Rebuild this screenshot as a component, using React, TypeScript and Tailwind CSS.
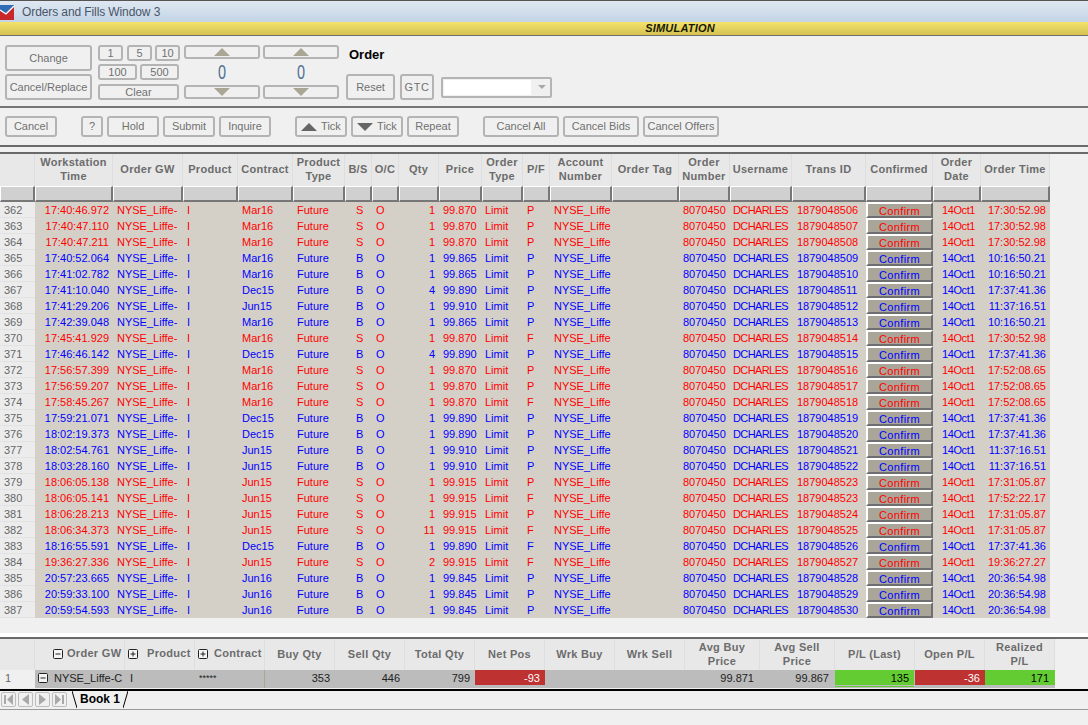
import React from "react";

const GRID = "grid grid-cols-[35px_78px_70px_55px_55px_52px_27px_27px_40px_43px_41px_27px_62px_67px_51px_62px_74px_67px_48px_69px] grid-rows-[minmax(0,1fr)] w-[1050px]";
const SUM_GRID = "grid grid-cols-[35px_15px_75px_70px_70px_70px_70px_70px_70px_70px_70px_75px_75px_80px_70px_70px] grid-rows-[minmax(0,1fr)] w-[1055px]";

const headers = [
  "", "Workstation|Time", "Order GW", "Product", "Contract", "Product|Type", "B/S", "O/C", "Qty", "Price",
  "Order|Type", "P/F", "Account|Number", "Order Tag", "Order|Number", "Username", "Trans ID", "Confirmed", "Order|Date", "Order Time",
];

// n, time, contract, side, qty, price, p/f, trans id, order time
const rows: [number, string, string, string, number, string, string, string, string][] = [
  [362, "17:40:46.972", "Mar16", "S", 1, "99.870", "P", "1879048506", "17:30:52.98"],
  [363, "17:40:47.110", "Mar16", "S", 1, "99.870", "P", "1879048507", "17:30:52.98"],
  [364, "17:40:47.211", "Mar16", "S", 1, "99.870", "P", "1879048508", "17:30:52.98"],
  [365, "17:40:52.064", "Mar16", "B", 1, "99.865", "P", "1879048509", "10:16:50.21"],
  [366, "17:41:02.782", "Mar16", "B", 1, "99.865", "P", "1879048510", "10:16:50.21"],
  [367, "17:41:10.040", "Dec15", "B", 4, "99.890", "P", "1879048511", "17:37:41.36"],
  [368, "17:41:29.206", "Jun15", "B", 1, "99.910", "P", "1879048512", "11:37:16.51"],
  [369, "17:42:39.048", "Mar16", "B", 1, "99.865", "P", "1879048513", "10:16:50.21"],
  [370, "17:45:41.929", "Mar16", "S", 1, "99.870", "F", "1879048514", "17:30:52.98"],
  [371, "17:46:46.142", "Dec15", "B", 4, "99.890", "P", "1879048515", "17:37:41.36"],
  [372, "17:56:57.399", "Mar16", "S", 1, "99.870", "P", "1879048516", "17:52:08.65"],
  [373, "17:56:59.207", "Mar16", "S", 1, "99.870", "P", "1879048517", "17:52:08.65"],
  [374, "17:58:45.267", "Mar16", "S", 1, "99.870", "F", "1879048518", "17:52:08.65"],
  [375, "17:59:21.071", "Dec15", "B", 1, "99.890", "P", "1879048519", "17:37:41.36"],
  [376, "18:02:19.373", "Dec15", "B", 1, "99.890", "P", "1879048520", "17:37:41.36"],
  [377, "18:02:54.761", "Jun15", "B", 1, "99.910", "P", "1879048521", "11:37:16.51"],
  [378, "18:03:28.160", "Jun15", "B", 1, "99.910", "P", "1879048522", "11:37:16.51"],
  [379, "18:06:05.138", "Jun15", "S", 1, "99.915", "P", "1879048523", "17:31:05.87"],
  [380, "18:06:05.141", "Jun15", "S", 1, "99.915", "F", "1879048523", "17:52:22.17"],
  [381, "18:06:28.213", "Jun15", "S", 1, "99.915", "P", "1879048524", "17:31:05.87"],
  [382, "18:06:34.373", "Jun15", "S", 11, "99.915", "F", "1879048525", "17:31:05.87"],
  [383, "18:16:55.591", "Dec15", "B", 1, "99.890", "F", "1879048526", "17:37:41.36"],
  [384, "19:36:27.336", "Jun15", "S", 2, "99.915", "F", "1879048527", "19:36:27.27"],
  [385, "20:57:23.665", "Jun16", "B", 1, "99.845", "P", "1879048528", "20:36:54.98"],
  [386, "20:59:33.100", "Jun16", "B", 1, "99.845", "P", "1879048529", "20:36:54.98"],
  [387, "20:59:54.593", "Jun16", "B", 1, "99.845", "P", "1879048530", "20:36:54.98"],
];

const Btn = ({ className, children }: { className: string; children: React.ReactNode }) => (
  <div className={`flex items-center justify-center border-2 border-[#b4b4b4] rounded-[3px] bg-[#f0f0f0] text-[11px] text-[#707070] whitespace-nowrap ${className}`}>
    {children}
  </div>
);

const Tri = ({ down, className }: { down?: boolean; className: string }) => (
  <svg viewBox="0 0 16 8" className={className}>
    <polygon points={down ? "0,0 16,0 8,8" : "8,0 16,8 0,8"} fill="currentColor" />
  </svg>
);

const Toggle = ({ minus }: { minus?: boolean }) => (
  <svg viewBox="0 0 10 10" className="w-[10px] h-[10px] shrink-0">
    <rect x="0.5" y="0.5" width="9" height="9" rx="1" fill="#f4f4f4" stroke="#222" />
    <path d={minus ? "M2.5 5h5" : "M2.5 5h5M5 2.5v5"} stroke="#222" />
  </svg>
);

const Nav = ({ d }: { d: string }) => (
  <div className="w-[15px] h-[15px] border border-[#bdbdbd] rounded-[2px] flex items-center justify-center bg-[#f0f0f0]">
    <svg viewBox="0 0 9 11" className="w-[9px] h-[11px]">
      <path d={d} fill="#a8a8a8" />
    </svg>
  </div>
);

const HeadCell = ({ text, className = "" }: { text: string; className?: string }) => (
  <div className={`flex flex-col items-center justify-center bg-[#e8e8e8] border-r border-[#dedede] text-[11px] leading-[14px] font-bold tracking-[0.3px] text-[#6c6c6c] whitespace-nowrap ${className}`}>
    {text.split("|").map((l) => (
      <span key={l}>{l}</span>
    ))}
  </div>
);

const Stepper = ({ className }: { className: string }) => (
  <div className={`w-[76px] flex flex-col items-stretch ${className}`}>
    <Btn className="h-[14px]">
      <Tri className="w-[16px] h-[8px] text-[#aaa696]" />
    </Btn>
    <div className="h-[26px] flex items-center justify-center text-[20px] scale-x-[0.72] text-[#4f6f94]">0</div>
    <Btn className="h-[14px]">
      <Tri down className="w-[16px] h-[8px] text-[#aaa696]" />
    </Btn>
  </div>
);

export default function App() {
  return (
    <div className="w-[1088px] h-[725px] overflow-hidden bg-[#f0f0f0] font-['Liberation_Sans',Arial,sans-serif]">
      {/* title bar */}
      <div className="h-[22px] flex items-center gap-2 border-t border-[#555] bg-gradient-to-b from-[#dfe8f1] to-[#c3d4e6]">
        <svg viewBox="0 0 14 16" className="w-[14px] h-[16px] shrink-0">
          <rect width="14" height="15" y="1" fill="#c8262a" />
          <path d="M0 1h14v1L6 10 0 6z" fill="#2f6db5" />
          <path d="M0 6l6 4 8-8" fill="none" stroke="#fff" strokeWidth="1.3" />
        </svg>
        <span className="text-[12px] text-[#4a5568] tracking-[-0.1px]">Orders and Fills Window 3</span>
      </div>
      {/* simulation banner */}
      <div className="h-[14px] flex items-center justify-center pl-[272px] bg-gradient-to-b from-[#f3e46c] to-[#d6c253] border-b border-[#6e6e6e]">
        <span className="text-[11px] font-bold italic text-[#1a1a00] tracking-[0.2px]">SIMULATION</span>
      </div>

      {/* order ticket */}
      <div className="h-[72px] flex items-start pl-[5px] pt-[9px] border-b-2 border-[#777]">
        <div className="w-[87px] flex flex-col gap-[3px]">
          <Btn className="h-[26px]">Change</Btn>
          <Btn className="h-[26px]">Cancel/Replace</Btn>
        </div>
        <div className="w-[81px] ml-[6px] flex flex-col gap-[3px]">
          <div className="flex">
            <Btn className="w-[25px] h-[16px] shrink-0">1</Btn>
            <Btn className="w-[25px] h-[16px] shrink-0 ml-[4px]">5</Btn>
            <Btn className="w-[25px] h-[16px] shrink-0 ml-[3px]">10</Btn>
          </div>
          <div className="flex gap-[3px]">
            <Btn className="w-[39px] h-[16px]">100</Btn>
            <Btn className="w-[39px] h-[16px]">500</Btn>
          </div>
          <div className="mt-[1px]">
            <Btn className="h-[16px]">Clear</Btn>
          </div>
        </div>
        <Stepper className="ml-[5px]" />
        <Stepper className="ml-[3px]" />
        <div className="ml-[7px] flex flex-col">
          <div className="h-[20px] pl-[3px] flex items-center text-[13px] font-bold text-black">Order</div>
          <div className="mt-[9px] flex items-center">
            <Btn className="w-[49px] h-[26px]">Reset</Btn>
            <Btn className="w-[34px] h-[26px] ml-[5px] tracking-[0.6px]">GTC</Btn>
            <div className="w-[111px] h-[21px] ml-[7px] border-2 border-[#b4b4b4] rounded-[2px] flex items-center bg-[#f0f0f0] pl-[1px] pr-[4px]">
              <div className="w-[88px] h-[15px] bg-white" />
              <Tri down className="w-[8px] h-[4px] ml-[7px] text-[#a8a8a8]" />
            </div>
          </div>
        </div>
      </div>

      {/* action buttons */}
      <div className="h-[39px] flex items-start pl-[5px] pt-[8px] border-b-2 border-[#6a6a6a]">
        <Btn className="w-[52px] h-[21px]">Cancel</Btn>
        <Btn className="w-[22px] h-[21px] ml-[24px]">?</Btn>
        <Btn className="w-[52px] h-[21px] ml-[4px]">Hold</Btn>
        <Btn className="w-[52px] h-[21px] ml-[4px]">Submit</Btn>
        <Btn className="w-[52px] h-[21px] ml-[4px]">Inquire</Btn>
        <Btn className="w-[52px] h-[21px] ml-[24px] gap-[4px]">
          <Tri className="w-[16px] h-[8px] text-[#666]" />
          Tick
        </Btn>
        <Btn className="w-[52px] h-[21px] ml-[4px] gap-[4px]">
          <Tri down className="w-[16px] h-[8px] text-[#666]" />
          Tick
        </Btn>
        <Btn className="w-[52px] h-[21px] ml-[4px]">Repeat</Btn>
        <Btn className="w-[76px] h-[21px] ml-[24px]">Cancel All</Btn>
        <Btn className="w-[76px] h-[21px] ml-[4px]">Cancel Bids</Btn>
        <Btn className="w-[76px] h-[21px] ml-[4px]">Cancel Offers</Btn>
      </div>

      {/* orders table */}
      <div className="mt-[5px] border-t-2 border-[#6a6a6a]">
        <div className={`${GRID} h-[32px]`}>
          {headers.map((h, i) => (
            <HeadCell key={i} text={h} className="pb-[3px]" />
          ))}
        </div>
        <div className={`${GRID} h-[16px]`}>
          {headers.map((_, i) => (
            <div key={i} className="bg-[#d0d0d0] border-t border-l border-r-2 border-b-2 border-t-white border-l-white border-r-[#777] border-b-[#777]" />
          ))}
        </div>
        {rows.map(([n, time, contract, side, qty, price, pf, trans, orderTime]) => {
          const color = side === "S" ? "text-[#ff0000]" : "text-[#0000ff]";
          return (
            <div key={n} className={`${GRID} h-[16px] text-[11px] leading-[16px] whitespace-nowrap bg-[#d4d0c8] ${color}`}>
              <div className="bg-[#ececec] border-b border-[#e2e2e2] pl-[4px] text-[#666]">{n}</div>
              <div className="text-right pr-[4px]">{time}</div>
              <div className="pl-[4px]">NYSE_Liffe-</div>
              <div className="pl-[4px]">I</div>
              <div className="pl-[4px]">{contract}</div>
              <div className="pl-[4px]">Future</div>
              <div className="pl-[11px]">{side}</div>
              <div className="pl-[4px]">O</div>
              <div className="text-right pr-[4px]">{qty}</div>
              <div className="pl-[4px]">{price}</div>
              <div className="pl-[3px]">Limit</div>
              <div className="pl-[4px]">{pf}</div>
              <div className="pl-[4px]">NYSE_Liffe</div>
              <div />
              <div className="pl-[4px]">8070450</div>
              <div className="pl-[3px] tracking-[-0.6px]">DCHARLES</div>
              <div className="pl-[5px]">{trans}</div>
              <div className="flex items-center justify-center pt-[2px] leading-[12px] bg-[#a9a598] border-2 border-t-white border-l-white border-r-[#6f6f6f] border-b-[#6f6f6f] tracking-[0.35px]">
                Confirm
              </div>
              <div className="pl-[9px] tracking-[-0.4px]">14Oct1</div>
              <div className="text-right pr-[4px]">{orderTime}</div>
            </div>
          );
        })}
      </div>

      {/* position summary */}
      <div className="mt-[15px] border-t-[4px] border-t-white">
        <div className="border-t-2 border-[#6a6a6a]">
          <div className={`${SUM_GRID} h-[31px]`}>
            <HeadCell text="" />
            <HeadCell text="" className="border-r-0" />
            <div className="flex items-center gap-[4px] pl-[3px] pb-[2px] bg-[#e8e8e8] border-r border-[#dedede] text-[11px] font-bold tracking-[0.3px] text-[#6c6c6c] whitespace-nowrap">
              <Toggle minus />
              Order GW
            </div>
            <div className="flex items-center gap-[9px] pl-[3px] pb-[2px] bg-[#e8e8e8] border-r border-[#dedede] text-[11px] font-bold tracking-[0.3px] text-[#6c6c6c] whitespace-nowrap">
              <Toggle />
              Product
            </div>
            <div className="flex items-center gap-[6px] pl-[3px] pb-[2px] bg-[#e8e8e8] border-r border-[#dedede] text-[11px] font-bold tracking-[0.3px] text-[#6c6c6c] whitespace-nowrap">
              <Toggle />
              Contract
            </div>
            {["Buy Qty", "Sell Qty", "Total Qty", "Net Pos", "Wrk Buy", "Wrk Sell", "Avg Buy|Price", "Avg Sell|Price", "P/L (Last)", "Open P/L", "Realized|P/L"].map((h) => (
              <HeadCell key={h} text={h} className="pb-[2px]" />
            ))}
          </div>
          <div className={`${SUM_GRID} h-[18px] text-[11px] leading-[16px] whitespace-nowrap text-[#222]`}>
            <div className="pl-[5px] bg-[#f0f0f0] text-[#666]">1</div>
            <div className="bg-[#bcbcbc] pl-[3px] pt-[3px]">
              <Toggle minus />
            </div>
            <div className="bg-[#bcbcbc] pl-[4px]">NYSE_Liffe-C</div>
            <div className="bg-[#bcbcbc] pl-[5px]">I</div>
            <div className="bg-[#bcbcbc] pl-[4px] text-[9px] border-r border-[#a8a898]">*****</div>
            <div className="bg-[#bcbcbc] text-right pr-[5px]">353</div>
            <div className="bg-[#bcbcbc] text-right pr-[5px]">446</div>
            <div className="bg-[#bcbcbc] text-right pr-[5px]">799</div>
            <div className="bg-[#bcbcbc]">
              <div className="h-[15px] bg-[#bf3232] text-right pr-[5px] text-white">-93</div>
            </div>
            <div className="bg-[#bcbcbc]" />
            <div className="bg-[#bcbcbc]" />
            <div className="bg-[#bcbcbc] text-right pr-[6px]">99.871</div>
            <div className="bg-[#bcbcbc] text-right pr-[6px]">99.867</div>
            <div className="bg-[#bcbcbc]">
              <div className="h-[15px] mr-px bg-[#63cc33] text-right pr-[5px] text-black">135</div>
              <div className="h-px mt-px mr-px bg-[#63cc33]" />
            </div>
            <div className="bg-[#bcbcbc]">
              <div className="h-[15px] bg-[#bf3232] text-right pr-[5px] text-white">-36</div>
            </div>
            <div className="bg-[#bcbcbc]">
              <div className="h-[15px] bg-[#63cc33] text-right pr-[6px] text-black">171</div>
            </div>
          </div>
        </div>
      </div>

      {/* sheet tabs */}
      <div className="mt-[1px] h-[20px] flex items-start border-t-2 border-black">
        <div className="flex gap-[2px] pl-[1px] pt-[1px] w-[72px]">
          <Nav d="M0 1h2v9H0zM9 0v11L3 5.5z" />
          <Nav d="M8 0v11L1 5.5z" />
          <Nav d="M1 0v11l7-5.5z" />
          <Nav d="M0 0v11l6-5.5zM7 1h2v9H7z" />
        </div>
        <svg viewBox="0 0 5 17" className="w-[5px] h-[17px] shrink-0">
          <path d="M0 0L5 17" stroke="#000" fill="none" />
        </svg>
        <span className="text-[12px] leading-[17px] font-bold text-black px-[3px]">Book 1</span>
        <svg viewBox="0 0 5 17" className="w-[5px] h-[17px] shrink-0">
          <path d="M5 0L0 17" stroke="#000" fill="none" />
        </svg>
      </div>
      <div className="h-px bg-[#999]" />
    </div>
  );
}
